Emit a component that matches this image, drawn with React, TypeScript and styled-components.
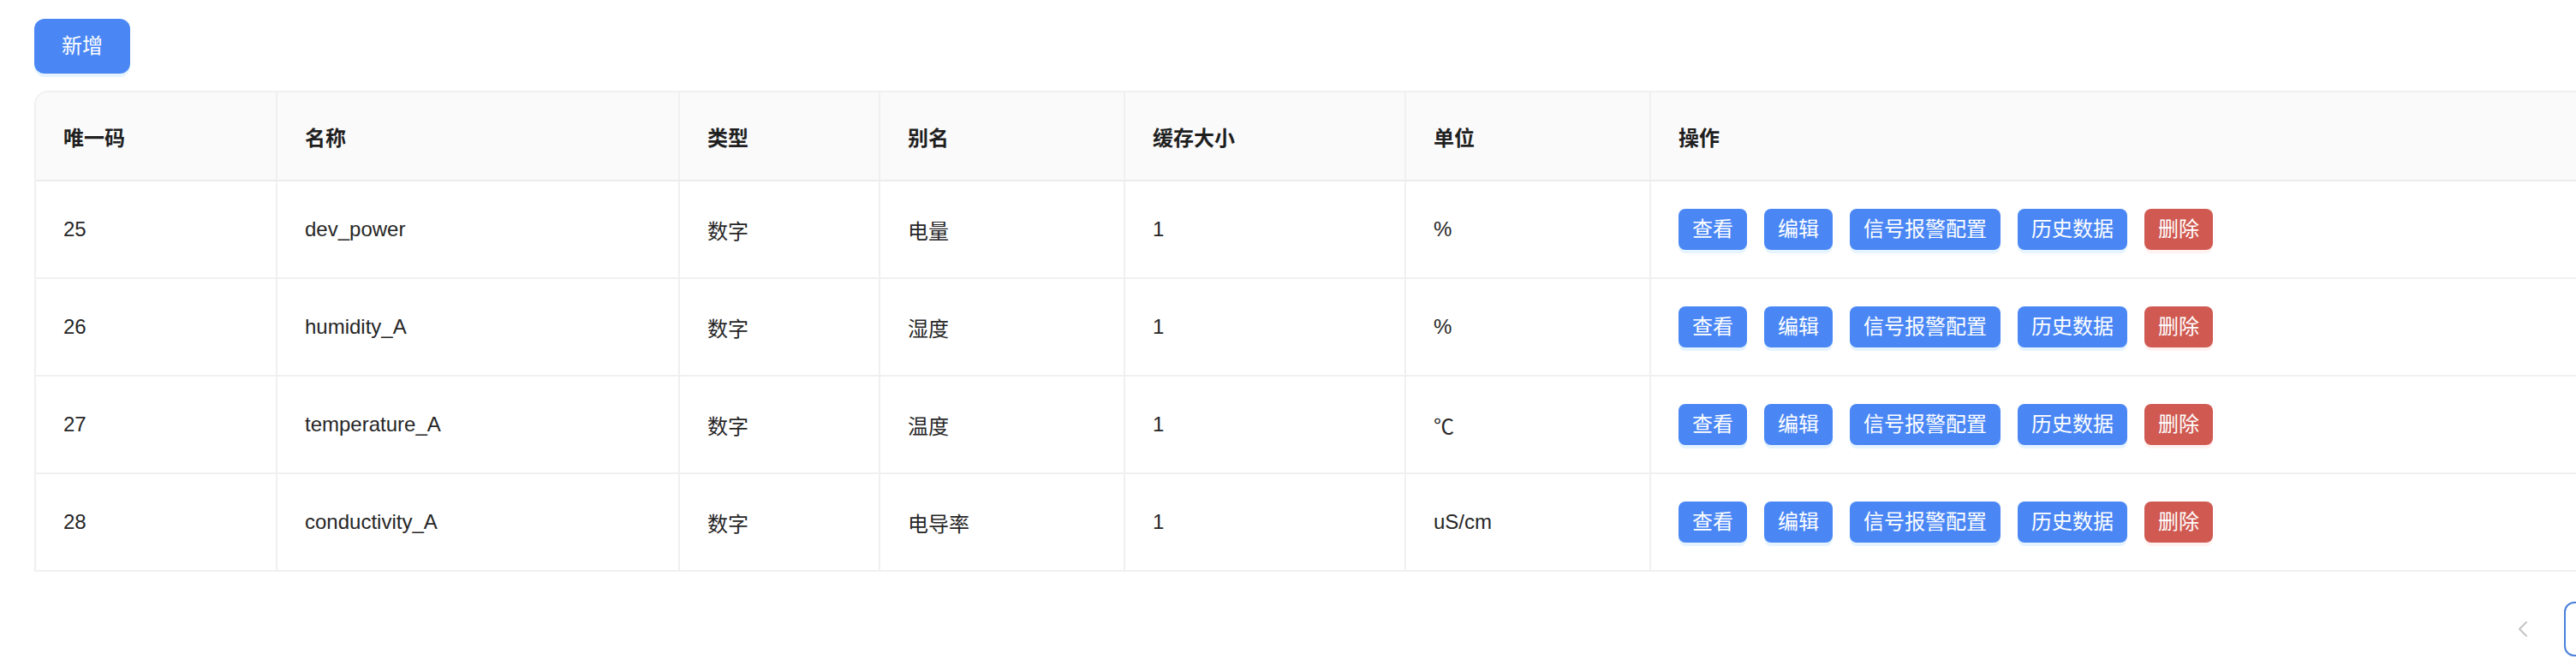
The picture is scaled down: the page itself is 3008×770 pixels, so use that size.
import React from "react";
import styled, { createGlobalStyle } from "styled-components";

const GlobalStyle = createGlobalStyle`
  html, body {
    margin: 0;
    padding: 0;
    overflow: hidden;
    background: #ffffff;
  }
  body {
    font-family: "Liberation Sans", "Noto Sans CJK SC", sans-serif;
    color: #262626;
  }
  * { box-sizing: border-box; }
`;

const Page = styled.div`
  padding: 22px 0 0 40px;
  width: 3200px;
`;

const Toolbar = styled.div`
  display: flex;
  margin-bottom: 20px;
`;

const PrimaryButton = styled.button`
  height: 64px;
  padding: 0 32px;
  border: none;
  border-radius: 12px;
  background: #4a87f5;
  color: #ffffff;
  font-family: inherit;
  font-size: 24px;
  line-height: 64px;
  box-shadow: 0 4px 0 rgba(5, 145, 255, 0.1);
  cursor: pointer;
`;

const TableBox = styled.div`
  width: 3098px;
  border-top: 2px solid #f0f0f0;
  border-left: 2px solid #f0f0f0;
  border-top-left-radius: 16px;
  overflow: hidden;
`;

const COLS = "282px 470px 234px 286px 328px 286px 1fr";

const Row = styled.div<{ $head?: boolean }>`
  display: grid;
  grid-template-columns: ${COLS};
  height: ${(p) => (p.$head ? "104px" : "114px")};
  background: ${(p) => (p.$head ? "#fafafa" : "#ffffff")};
`;

const Cell = styled.div<{ $head?: boolean }>`
  display: flex;
  align-items: center;
  gap: 20px;
  padding: 0 32px;
  border-right: 2px solid #f0f0f0;
  border-bottom: 2px solid ${(p) => (p.$head ? "#ececec" : "#f0f0f0")};
  font-size: 24px;
  font-weight: ${(p) => (p.$head ? 600 : 400)};
  color: ${(p) => (p.$head ? "#1f1f1f" : "#262626")};
  white-space: nowrap;
`;

const ActionButton = styled.button<{ $danger?: boolean }>`
  height: 48px;
  padding: 0 16px;
  border: none;
  border-radius: 8px;
  background: ${(p) => (p.$danger ? "#d05a52" : "#4a87f5")};
  color: #ffffff;
  font-family: inherit;
  font-size: 24px;
  line-height: 48px;
  box-shadow: ${(p) =>
    p.$danger ? "0 4px 0 rgba(255, 38, 5, 0.06)" : "0 4px 0 rgba(5, 145, 255, 0.1)"};
  cursor: pointer;
`;

const Pager = styled.div`
  width: 3098px;
  display: flex;
  justify-content: flex-end;
  align-items: center;
  gap: 16px;
  margin-top: 35px;
`;

const PagerItem = styled.div<{ $active?: boolean }>`
  width: 64px;
  height: 64px;
  display: flex;
  align-items: center;
  justify-content: center;
  border-radius: 12px;
  border: 2px solid ${(p) => (p.$active ? "#4a80da" : "transparent")};
  color: ${(p) => (p.$active ? "#4a80da" : "rgba(0,0,0,0.25)")};
  font-size: 24px;
  font-weight: ${(p) => (p.$active ? 600 : 400)};
`;

const Chevron = ({ dir }: { dir: "left" | "right" }) => (
  <svg width="14" height="20" viewBox="0 0 14 20" fill="none">
    <path
      d={dir === "left" ? "M11 2 L3 10 L11 18" : "M3 2 L11 10 L3 18"}
      stroke="#c4c4c4"
      strokeWidth="2"
      strokeLinecap="round"
      strokeLinejoin="round"
    />
  </svg>
);

const headers = ["唯一码", "名称", "类型", "别名", "缓存大小", "单位", "操作"];

const rows = [
  { id: "25", name: "dev_power", type: "数字", alias: "电量", size: "1", unit: "%" },
  { id: "26", name: "humidity_A", type: "数字", alias: "湿度", size: "1", unit: "%" },
  { id: "27", name: "temperature_A", type: "数字", alias: "温度", size: "1", unit: "℃" },
  { id: "28", name: "conductivity_A", type: "数字", alias: "电导率", size: "1", unit: "uS/cm" },
];

const actions = ["查看", "编辑", "信号报警配置", "历史数据"];

export default function App() {
  return (
    <>
      <GlobalStyle />
      <Page>
        <Toolbar>
          <PrimaryButton>新增</PrimaryButton>
        </Toolbar>
        <TableBox>
          <Row $head>
            {headers.map((h) => (
              <Cell $head key={h}>
                {h}
              </Cell>
            ))}
          </Row>
          {rows.map((r) => (
            <Row key={r.id}>
              <Cell>{r.id}</Cell>
              <Cell>{r.name}</Cell>
              <Cell>{r.type}</Cell>
              <Cell>{r.alias}</Cell>
              <Cell>{r.size}</Cell>
              <Cell>{r.unit}</Cell>
              <Cell>
                {actions.map((a) => (
                  <ActionButton key={a}>{a}</ActionButton>
                ))}
                <ActionButton $danger>删除</ActionButton>
              </Cell>
            </Row>
          ))}
        </TableBox>
        <Pager>
          <PagerItem>
            <Chevron dir="left" />
          </PagerItem>
          <PagerItem $active>1</PagerItem>
          <PagerItem>
            <Chevron dir="right" />
          </PagerItem>
        </Pager>
      </Page>
    </>
  );
}
